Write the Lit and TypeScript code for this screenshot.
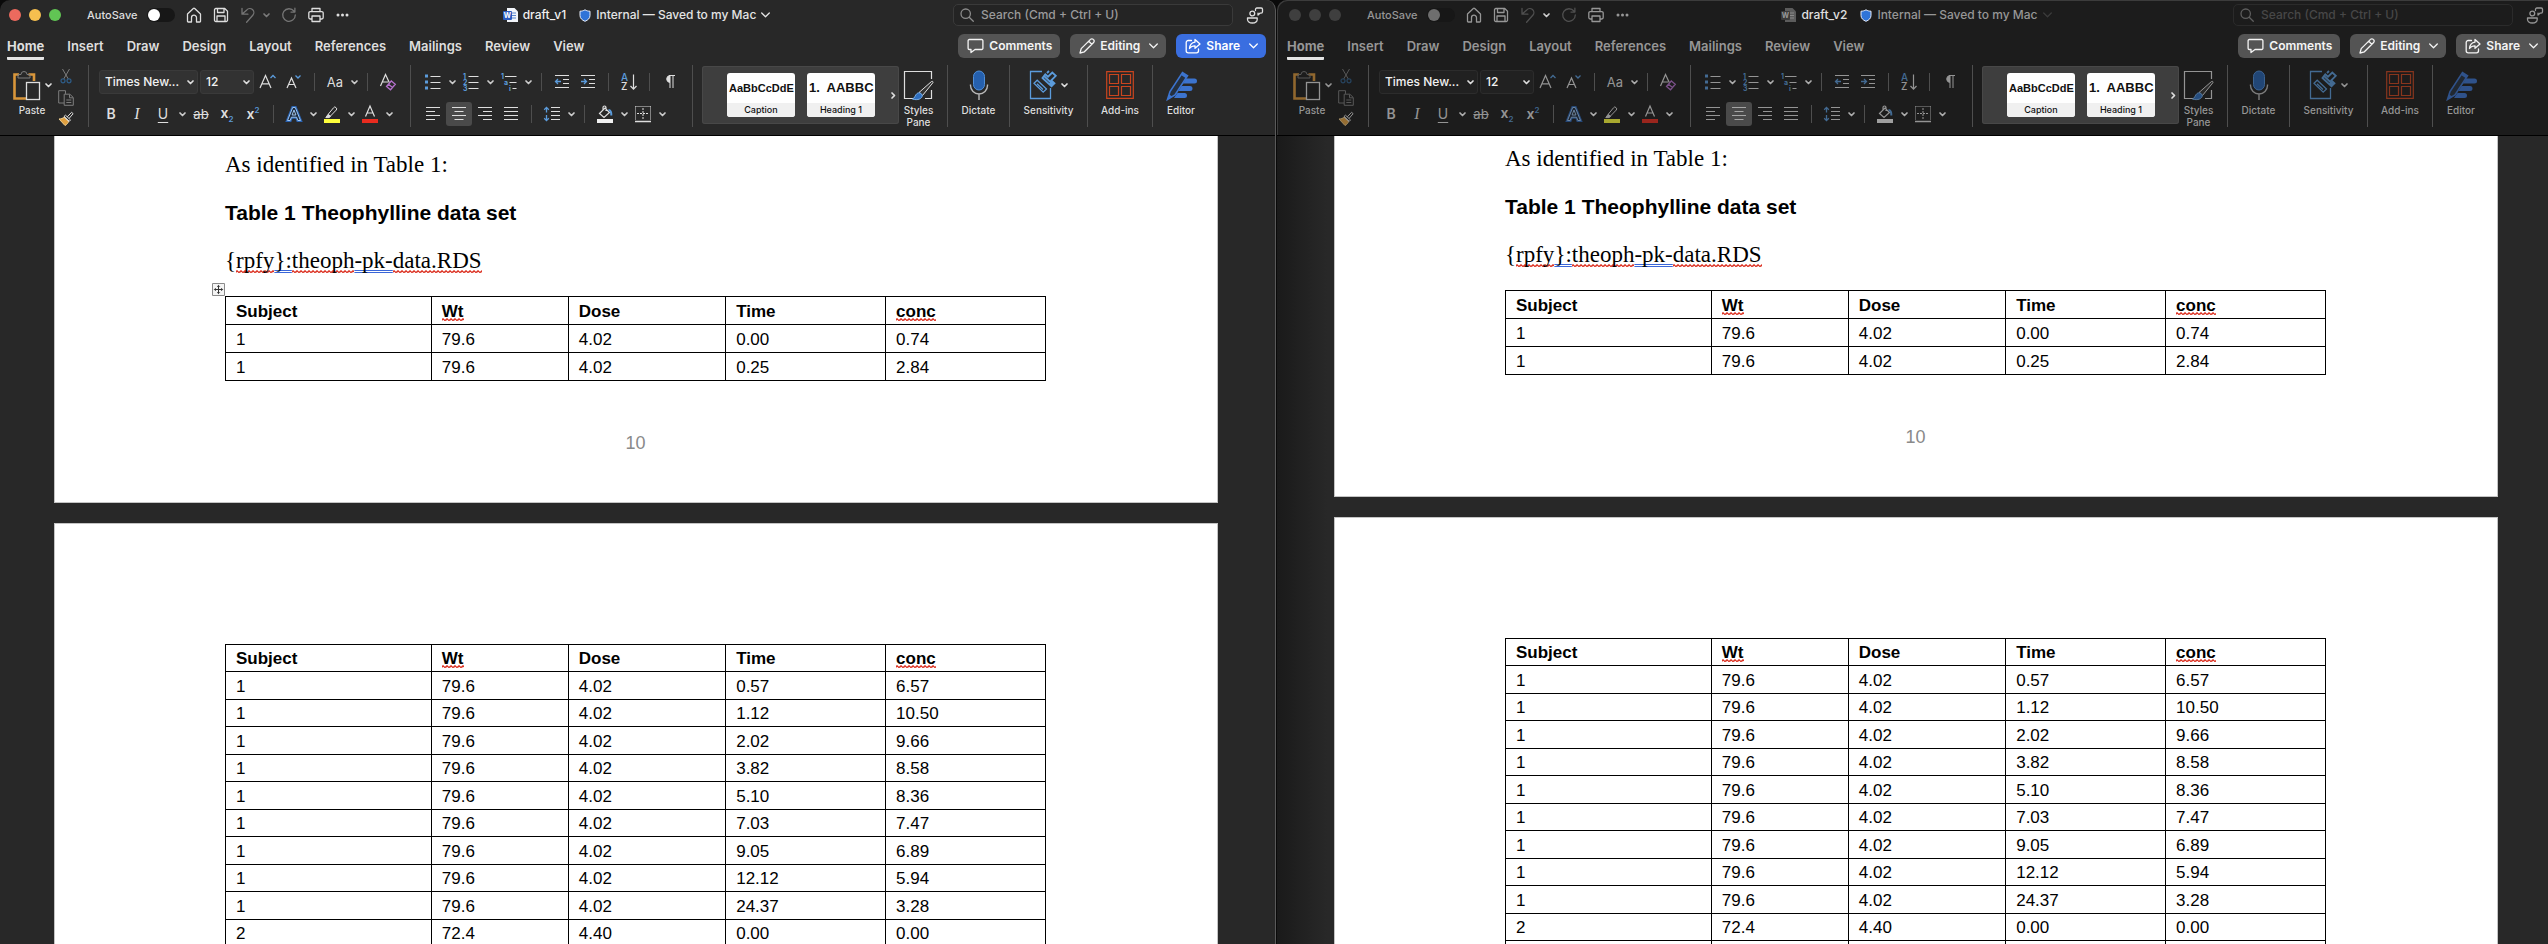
import { LitElement, html, css, TemplateResult } from "lit";
import { customElement, property } from "lit/decorators.js";
import { classMap } from "lit/directives/class-map.js";

type Row = string[];

const COLUMNS = ["Subject", "Wt", "Dose", "Time", "conc"];
const FLAGGED = new Set(["Wt", "conc"]);

const FIRST_ROWS: Row[] = [
  ["1", "79.6", "4.02", "0.00", "0.74"],
  ["1", "79.6", "4.02", "0.25", "2.84"],
];

const NEXT_ROWS: Row[] = [
  ["1", "79.6", "4.02", "0.57", "6.57"],
  ["1", "79.6", "4.02", "1.12", "10.50"],
  ["1", "79.6", "4.02", "2.02", "9.66"],
  ["1", "79.6", "4.02", "3.82", "8.58"],
  ["1", "79.6", "4.02", "5.10", "8.36"],
  ["1", "79.6", "4.02", "7.03", "7.47"],
  ["1", "79.6", "4.02", "9.05", "6.89"],
  ["1", "79.6", "4.02", "12.12", "5.94"],
  ["1", "79.6", "4.02", "24.37", "3.28"],
  ["2", "72.4", "4.40", "0.00", "0.00"],
  ["", "", "", "", ""],
];

const TABS = ["Home", "Insert", "Draw", "Design", "Layout", "References", "Mailings", "Review", "View"];

/* ---------- icons ---------- */

const chevron = html`<svg class="ic chev" width="7" height="5" viewBox="0 0 7 5"><path d="M1 1l2.5 2.5L6 1" /></svg>`;
const thinChevron = html`<svg class="ic thin" width="9" height="6" viewBox="0 0 9 6"><path d="M.7 1l3.8 3.7L8.3 1" /></svg>`;

const icons: Record<string, TemplateResult> = {
  home: html`<svg class="ic line" width="16" height="16" viewBox="0 0 16 16"><path d="M1.5 7L7.3 1.5a1 1 0 0 1 1.4 0L14.500 7v7.300a.7.7 0 0 1-.7.7h-3.300v-4.300a2.500 2.500 0 0 0-5 0V15H2.200a.7.7 0 0 1-.7-.7z" /></svg>`,
  save: html`<svg class="ic line" width="16" height="16" viewBox="0 0 16 16"><path d="M1.500 2.800A1.300 1.300 0 0 1 2.800 1.500h9l2.700 2.700v9a1.300 1.300 0 0 1-1.300 1.300H2.800a1.300 1.300 0 0 1-1.300-1.300zM4.500 1.500v4h6.500v-4M4 14.500V9h8v5.500" /></svg>`,
  undo: html`<svg class="ic line faint" width="16" height="16" viewBox="0 0 16 16"><path d="M2 1.300v5.900h5.900M2.200 7L6.800 2.900a4 4 0 0 1 6 5.400L6.600 15.200" /></svg>`,
  redo: html`<svg class="ic line faint" width="16" height="16" viewBox="0 0 16 16"><path d="M13 4.200A6.300 6.300 0 1 0 14.300 8M13.900 1.200v3.900H10" /></svg>`,
  print: html`<svg class="ic line" width="16" height="16" viewBox="0 0 16 16"><path d="M4 4.500V1.500h8v3M4 12H2.200A1.400 1.400 0 0 1 .8 10.600V6A1.400 1.400 0 0 1 2.200 4.600h11.600A1.400 1.400 0 0 1 15.200 6v4.600A1.400 1.400 0 0 1 13.800 12H12M4 9h8v5.500H4z" /></svg>`,
  more: html`<svg width="16" height="16" viewBox="0 0 16 16" fill="currentColor"><circle cx="3" cy="8" r="1.500" /><circle cx="7.500" cy="8" r="1.500" /><circle cx="12" cy="8" r="1.500" /></svg>`,
  word: html`<svg width="15" height="16" viewBox="0 0 15 16"><path class="sheet" d="M4 1h7.500L15 4.500V15H4z" /><path class="sheet-line" d="M9 6h4M9 8.500h4M9 11h4" /><rect class="tile" y="4" width="9" height="9" rx="1" /><text x="4.500" y="11" text-anchor="middle" class="tile-w">W</text></svg>`,
  shield: html`<svg width="12" height="13" viewBox="0 0 12 13"><path d="M6 .8c1.600 1 3.200 1.400 5 1.400v4.300c0 2.800-2 4.600-5 5.800-3-1.200-5-3-5-5.800V2.200c1.800 0 3.400-.4 5-1.400z" fill="#2f74d8" stroke="#e8eefb" /></svg>`,
  search: html`<svg class="ic line" width="14" height="14" viewBox="0 0 14 14"><circle cx="5.700" cy="5.700" r="4.700" /><path d="M9.200 9.200L13.300 13.300" /></svg>`,
  people: html`<svg class="ic line" width="18" height="17" viewBox="0 0 18 17"><circle cx="6.300" cy="6.500" r="2.400" /><path d="M1.500 11h9.700v1.200c0 2.200-2 3.800-4.900 3.800s-4.800-1.600-4.800-3.800zM9.500 3.500V2.300A1.300 1.300 0 0 1 10.800 1h4.400a1.300 1.300 0 0 1 1.300 1.300v2.500a1.300 1.300 0 0 1-1.300 1.300h-1l-2.200 2V6.100" /></svg>`,
  comment: html`<svg class="ic line" width="17" height="16" viewBox="0 0 17 16"><path d="M2.300 1.500h12.400a1.200 1.200 0 0 1 1.200 1.200v7.600a1.200 1.200 0 0 1-1.200 1.200H8l-4 3v-3H2.300a1.200 1.200 0 0 1-1.200-1.200V2.700a1.200 1.200 0 0 1 1.200-1.200z" /></svg>`,
  pencil: html`<svg class="ic line" width="16" height="16" viewBox="0 0 16 16"><path d="M1 15l1.200-4.400L11.500 1.400a1.900 1.900 0 0 1 2.800 0l.3.300a1.900 1.900 0 0 1 0 2.800L5.400 13.800zM9.800 3.200l3 3" /></svg>`,
  share: html`<svg class="ic line" width="16" height="16" viewBox="0 0 16 16"><path d="M6.500 2.500H3.200a2 2 0 0 0-2 2v8.300a2 2 0 0 0 2 2h8.300a2 2 0 0 0 2-2V11M10 1.500L15 6l-5 4.300V7.800c-2.600 0-4.200.8-5.500 2.700.3-3.600 2-5.900 5.500-6.400z" /></svg>`,
  paste: html`<svg class="ic" width="28" height="31" viewBox="0 0 28 31"><path d="M6 4.500H1.500v24H13" stroke="#d9963a" stroke-width="2.600" /><path d="M15.500 4.500h5.500V11" stroke="#d9963a" stroke-width="2.600" /><path class="gray" d="M5 8V4.500h3a3 3 0 0 1 6 0h3V8z" /><rect x="13.500" y="12.500" width="13" height="17" stroke-width="1.300" /></svg>`,
  cut: html`<svg class="ic" width="12" height="16" viewBox="0 0 12 16"><g class="gray"><path d="M2.500 1L8.300 11M9.500 1L3.700 11" /></g><g stroke="#2e5c87" stroke-width="1.200"><circle cx="3" cy="12.800" r="2" /><circle cx="9" cy="12.800" r="2" /></g></svg>`,
  copy: html`<svg class="ic gray" width="16" height="16" viewBox="0 0 16 16"><path d="M6 13H.7V.7h6.800v3.200M6.200 4.200h5.600L15.300 7.500v7.800H6.200zM11.500 4.500v3.300h3.500M8.300 10h5M8.300 12.500h5" /></svg>`,
  painter: html`<svg class="ic" width="16" height="16" viewBox="0 0 16 16"><path d="M1 8l6 6.500c2-1 3-2.500 3.800-4.200L6.400 6C5 7.300 3 8 1 8z" fill="#e0a040" stroke="#f0d090" /><path d="M6 5.600l5 4.700M7.500 4.200l5 4.700-1.300 1.500-5.300-4.800zM9.300 5.800L13.600 1.300l1.500 1.400-4 4.700" /></svg>`,
  grow: html`<svg class="ic" width="18" height="18" viewBox="0 0 18 18"><path d="M1 15L6.500 2.500 12 15M3 10.800h7" stroke-width="1.200" /><path class="blue" d="M11.500 5L14 2.500 16.500 5" stroke-width="1.300" /></svg>`,
  shrink: html`<svg class="ic" width="18" height="18" viewBox="0 0 18 18"><path d="M2 15L6.500 5 11 15M3.600 11.500h5.800" stroke-width="1.200" /><path class="blue" d="M10.500 2.500L13 5l2.500-2.500" stroke-width="1.300" /></svg>`,
  clear: html`<svg class="ic" width="18" height="18" viewBox="0 0 18 18"><path d="M1.500 13L6.500 1.500 10.500 10M3.500 9h5.500" stroke-width="1.200" /><path d="M7.500 13.500l4.800-5.500 4 3.300-4.800 5.500zM9.500 11.300l4 3.300" stroke="#b470cc" stroke-width="1.300" /></svg>`,
  effects: html`<svg class="ic" width="18" height="18" viewBox="0 0 18 18"><path d="M2.500 15.500L7.700 2.500h2.600l5.200 13h-2.700l-1.200-3.300H6.400l-1.200 3.300z" stroke="#2a62b0" stroke-width="3" /><path d="M2.500 15.500L7.700 2.500h2.600l5.200 13h-2.700l-1.200-3.300H6.400l-1.200 3.300zM7.100 10h3.800L9 5z" stroke="#9cc4f0" stroke-width="1" fill="#1d2c40" /></svg>`,
  highlight: html`<svg class="ic" width="18" height="18" viewBox="0 0 18 18"><path d="M5 9.500L10.500 2.800a1.600 1.600 0 0 1 2.500-.2l.2.200a1.600 1.600 0 0 1 0 2.300L7.500 11z" /><path d="M5 9.500L7.500 11.500 6 12.600H2.800z" fill="currentColor" /><path d="M1 14h16v4H1z" fill="#ffff3c" stroke="none" /></svg>`,
  color: html`<svg class="ic" width="18" height="18" viewBox="0 0 18 18"><path d="M4.500 11.500L9 1l4.500 10.500M6.200 8h5.600" stroke-width="1.200" /><path d="M1 14h16v4H1z" fill="#e82b1f" stroke="none" /></svg>`,
  bullets: html`<svg class="ic" width="18" height="18" viewBox="0 0 18 18"><path class="fill" d="M1 1.500h3v3H1zM1 7.500h3v3H1zM1 13.500h3v3H1z" /><path d="M6.500 3.500h10M6.500 9.500h10M6.500 15.500h10" /></svg>`,
  numbers: html`<svg class="ic" width="18" height="18" viewBox="0 0 18 18"><text class="tiny" x="1" y="5.500">1</text><text class="tiny" x="1" y="11.500">2</text><text class="tiny" x="1" y="17.500">3</text><path d="M6.500 3.500h10M6.500 9.500h10M6.500 15.500h10" /></svg>`,
  levels: html`<svg class="ic" width="18" height="18" viewBox="0 0 18 18"><text class="tiny" x="1" y="5.500">1</text><text class="tiny" x="4" y="11.500">a</text><text class="tiny" x="9" y="17.500">i</text><path d="M5 3.500h11.500M9.500 9.500h7M12.500 15.500h4" /></svg>`,
  outdent: html`<svg class="ic" width="16" height="16" viewBox="0 0 16 16"><path d="M1 1.500h14M9 5.500h6M9 9.500h6M1 13.500h14" /><path class="blue" d="M1.500 7.500H7M4 5L1.500 7.500 4 10" stroke-width="1.300" /></svg>`,
  indent: html`<svg class="ic" width="16" height="16" viewBox="0 0 16 16"><path d="M1 1.500h14M9 5.500h6M9 9.500h6M1 13.500h14" /><path class="blue" d="M1 7.500h5.500M4 5l2.500 2.500L4 10" stroke-width="1.300" /></svg>`,
  sort: html`<svg class="ic" width="18" height="18" viewBox="0 0 18 18"><text class="letter blue-text" x="1" y="8">A</text><text class="letter" x="1" y="17">Z</text><path d="M13.500 1.500V16M10.500 13l3 3.200 3-3.200" stroke-width="1.200" /></svg>`,
  pilcrow: html`<svg class="ic" width="12" height="16" viewBox="0 0 12 16"><path d="M5.500 8.500a3.600 3.600 0 0 1 0-7z" fill="currentColor" /><path d="M5 1.500h6M6 1.500V14M9 1.500V14" /></svg>`,
  left: html`<svg class="ic" width="16" height="16" viewBox="0 0 16 16"><path d="M1 1.500h14M1 5.500h9M1 9.500h14M1 13.500h9" /></svg>`,
  center: html`<svg class="ic" width="16" height="16" viewBox="0 0 16 16"><path d="M1 1.500h14M3.500 5.500h9M1 9.500h14M3.500 13.500h9" /></svg>`,
  right: html`<svg class="ic" width="16" height="16" viewBox="0 0 16 16"><path d="M1 1.500h14M6 5.500h9M1 9.500h14M6 13.500h9" /></svg>`,
  justify: html`<svg class="ic" width="16" height="16" viewBox="0 0 16 16"><path d="M1 1.500h14M1 5.500h14M1 9.500h14M1 13.500h14" /></svg>`,
  spacing: html`<svg class="ic" width="18" height="16" viewBox="0 0 18 16"><path d="M8 1.500h9M8 5.500h9M8 9.500h9M8 13.500h9" /><path class="blue" d="M3.500 1.500v5M1.200 3.700l2.300-2.300 2.300 2.300M3.500 9v5.500M1.200 12.300l2.300 2.300 2.300-2.300" stroke-width="1.300" /></svg>`,
  shading: html`<svg class="ic" width="18" height="18" viewBox="0 0 18 18"><path d="M3.500 8.500L9 3l4.500 4.500L8 12.500zM7 5V2.500a1.500 1.500 0 0 1 3 0V6" stroke-width="1.200" /><path class="blue" d="M12.500 5c2 0 3 2 2.800 5.500" stroke-width="2" /><path class="bar" d="M1 14h16v4H1z" stroke="none" /></svg>`,
  borders: html`<svg class="ic" width="18" height="18" viewBox="0 0 18 18"><path d="M1.500 1.500h15M1.500 1.500v13M16.500 1.500v13" stroke-dasharray="1 1" /><path d="M9 3v11M3 8.500h12" stroke-dasharray="2 1" /><path d="M1 16.500h16" stroke-width="1.500" /></svg>`,
  styles: html`<svg class="ic" width="32" height="31" viewBox="0 0 32 31"><path d="M10 28.500H1.500v-27h27V9M28.500 20v8.500H22" stroke-width="1.200" /><path d="M16 22.500L28.500 11.500c1-.6 1.900.3 1.400 1.200L19.500 25.500z" fill="#353535" /><path d="M9.500 29c2.500-.8 2.300-3.800 4.500-5.500 2-1.500 4.800-.3 5.200 1.800.5 3.300-4.700 5.500-9.700 3.700z" fill="#2f6fc0" stroke="#78aee8" /></svg>`,
  dictate: html`<svg class="ic" width="20" height="31" viewBox="0 0 20 31"><rect x="4.500" y="1" width="11" height="19" rx="5.500" fill="#2560ae" stroke="#4f8fd8" /><path d="M1.500 14.500v1a8.500 8.500 0 0 0 17 0v-1M10 24.500V30" class="soft" stroke-width="1.400" /></svg>`,
  sensitivity: html`<svg class="ic" width="28" height="31" viewBox="0 0 28 31"><g class="blue" stroke-width="1.300"><path d="M13 1.500H1.500v27h20V18" /><path d="M5 13.200l3.200-3L17.500 19l-3.300 3.200z" /><path d="M8 13.800l6 5.600" /><path d="M13.500 8l9 8.300 3-3-3.200-3 4.500-4.500-3.500-3.300L19 6.700l-2.700-2.400zM15 6l9 8.500M18 3l2-2M21 13l3 3" stroke-width="1.800" /></g></svg>`,
  addins: html`<svg class="ic" width="28" height="28" viewBox="0 0 28 28"><g stroke="#c9451f" stroke-width="1.200"><path d="M.7.700h26.600v26.600H.7zM3.500 3.500h9v9h-9zM15.500 3.500h9v9h-9zM3.500 15.500h9v9h-9zM15.500 15.500h9v9h-9z" /></g></svg>`,
  editor: html`<svg class="ic" width="31" height="31" viewBox="0 0 31 31"><path d="M20 8.500h8.500a2.500 2.500 0 0 1 0 5H17zM15.500 16h8.500a2.500 2.500 0 0 1 0 5H12.500zM11.500 23h7a2.500 2.500 0 0 1 0 5H8z" fill="#3c74cf" stroke="none" /><path d="M1.500 29.500L4 21.500 16.500 2.500l5 3.200L9 25z" fill="#25303f" stroke="#3c74cf" stroke-width="1.600" /><path d="M16.500 2.500l5 3.200-1.500 2.500-5-3.200zM1.500 29.500l1.500-5 3.500 2z" fill="#3c74cf" stroke="none" /></svg>`,
  next: html`<svg class="ic chev" width="5" height="7" viewBox="0 0 5 7"><path d="M1 1l2.500 2.500L1 6" /></svg>`,
  move: html`<svg width="13" height="13" viewBox="0 0 13 13" fill="none" stroke="#333"><path d="M.5.500h12v12H.5z" fill="#f4f4f4" stroke="#8a8a8a" /><path d="M6.500 2.500v8M2.500 6.500h8M5.200 3.700l1.300-1.300 1.300 1.300M5.200 9.300l1.300 1.300 1.300-1.300M3.700 5.200L2.400 6.500l1.300 1.300M9.300 5.200l1.300 1.300-1.300 1.300" /></svg>`,
};

/** One Word window: title bar, ribbon and the scrolled document. */
@customElement("word-window")
export class WordWindow extends LitElement {
  @property() name = "";
  @property({ type: Boolean, reflect: true }) active = false;

  static styles = css`
    :host {
      --chrome: #1c1c1c;
      --text: #969696;
      --strong: #e0e0e0;
      --inset-left: 3px;
      --inset-right: 2px;
      --dim: 0.62;
      --page-top: 9px;
      --blue: #5b9bdb;
      display: flex;
      flex-direction: column;
      min-width: 0;
      min-height: 0;
      overflow: hidden;
      background: var(--chrome);
      color: var(--text);
      border-radius: 10px 0 0 0;
      box-shadow: inset 1px 1px 0 #3c3c3c;
      font: 500 12px/16px Inter, "Liberation Sans", sans-serif;
    }
    :host([active]) {
      --chrome: #282828;
      --text: #dedede;
      --strong: #f0f0f0;
      --inset-left: 0px;
      --inset-right: 9px;
      --dim: 1;
      --page-top: 15px;
      border-right: 1px solid #5a5a5a;
      border-radius: 10px 10px 0 0;
      box-shadow: none;
    }
    button, select, input {
      font: inherit;
      color: inherit;
      margin: 0;
      padding: 0;
      border: 0;
      background: none;
    }
    button { display: inline-flex; align-items: center; justify-content: center; }
    svg { display: block; flex: none; overflow: visible; }
    .ic { fill: none; stroke: currentColor; stroke-width: 1; }
    .line { stroke-width: 1.3; stroke-linejoin: round; stroke-linecap: round; }
    .chev { stroke-width: 1.7; stroke-linecap: round; stroke-linejoin: round; }
    .thin { stroke-width: 1.3; stroke-linecap: round; stroke-linejoin: round; }
    .gray { stroke: #7d7d7d; }
    .soft { stroke: #b8b8b8; }
    .blue { stroke: var(--blue); }
    .fill { fill: var(--blue); stroke: none; }
    .bar { fill: #f0f0f0; }
    .faint { opacity: 0.42; }
    .tiny { fill: var(--blue); stroke: none; font: 700 7px Inter, sans-serif; }
    .letter { fill: currentColor; stroke: none; font: 500 10px Inter, sans-serif; }
    .blue-text { fill: var(--blue); }

    .title-bar {
      display: grid;
      grid-template-columns: minmax(0, 1fr) auto minmax(0, 1fr);
      align-items: center;
      height: 30px;
      flex: none;
      padding-left: calc(var(--inset-left) + 9px);
      padding-right: calc(var(--inset-right) + 2px);
    }
    .quick { display: flex; align-items: center; gap: 11px; }
    .lights { display: flex; gap: 8px; margin-right: 15px; }
    .light { width: 12px; height: 12px; border-radius: 50%; background: #3f3f3f; }
    :host([active]) .close { background: #ec6a5e; }
    :host([active]) .minimise { background: #f5bf4f; }
    :host([active]) .zoom { background: #61c554; }
    .autosave { display: flex; align-items: center; gap: 10px; font-size: 11px; }
    .switch {
      appearance: none;
      display: flex;
      align-items: center;
      width: 28px;
      height: 14px;
      padding: 1px;
      box-sizing: border-box;
      border-radius: 7px;
      background: #171717;
    }
    .switch::before { content: ""; width: 12px; height: 12px; border-radius: 50%; background: #6e6e6e; }
    :host([active]) .switch::before { background: #fff; }
    .undo { display: flex; align-items: center; gap: 7px; }
    .undo button:last-child { color: #cfcfcf; }
    :host([active]) .undo button:last-child { color: #7a7a7a; }
    .doc-title { display: flex; align-items: center; gap: 5px; font-weight: 500; }
    .doc-title h1 { margin: 0 8px 0 0; font: inherit; color: var(--strong); }
    .doc-title .thin { opacity: 0.25; }
    :host([active]) .doc-title { color: #e4e4e4; }
    :host([active]) .doc-title .thin { opacity: 1; }
    .sheet { fill: #5c5c5c; }
    .sheet-line { stroke: #8a8a8a; }
    .tile { fill: #3a3a3a; }
    .tile-w { fill: #9a9a9a; font: 700 7px Inter, sans-serif; }
    :host([active]) .sheet { fill: #f2f5fa; }
    :host([active]) .sheet-line { stroke: #5a86d0; }
    :host([active]) .tile { fill: #2a5cc0; }
    :host([active]) .tile-w { fill: #fff; }
    .find { display: flex; align-items: center; justify-content: flex-end; gap: 13px; min-width: 0; }
    .search {
      display: flex;
      align-items: center;
      gap: 7px;
      flex: 0 1 280px;
      height: 22px;
      box-sizing: border-box;
      padding: 0 6px;
      border: 1px solid #2b2b2b;
      border-radius: 5px;
      color: #5e5e5e;
    }
    .search input { flex: 1; min-width: 0; outline: none; }
    .search input::placeholder { color: #474747; opacity: 1; }
    :host([active]) .search { border-color: #3a3a3a; background: #242424; color: #8c8c8c; }
    :host([active]) .search input::placeholder { color: #9a9a9a; }

    .tab-bar {
      display: flex;
      align-items: center;
      justify-content: space-between;
      height: 32px;
      flex: none;
      padding-left: calc(var(--inset-left) + 7px);
      padding-right: var(--inset-right);
      font-size: 12px;
    }
    .tabs { display: flex; gap: 23px; font-weight: 600; font-size: 13px; }
    .tabs button { padding: 5px 0 3px; border-bottom: 3px solid transparent; border-radius: 1px; }
    .tabs .current { font-weight: 700; border-bottom-color: #e4e4e4; }
    .actions { display: flex; gap: 10px; }
    .actions button {
      height: 24px;
      gap: 5px;
      padding: 0 8px 0 9px;
      border-radius: 6px;
      background: #545454;
      color: #f4f4f4;
      font-weight: 600;
    }
    .actions .thin { margin-left: 4px; }
    :host([active]) .actions .primary { background: #3a6ee0; color: #fff; }

    .ribbon {
      display: flex;
      gap: 9px;
      height: 62px;
      flex: none;
      padding: 3px var(--inset-right) 8px calc(var(--inset-left) + 12px);
      border-bottom: 1px solid #000;
    }
    .rule { width: 1px; background: #4e4e4e; }
    .paste, .big { flex-direction: column; justify-content: flex-start; flex: none; padding-top: 5px; gap: 4px; font-size: 10px; line-height: 12px; }
    .paste { width: 40px; gap: 3px; }
    .with-menu { display: flex; align-items: center; gap: 4px; }
    .art { display: flex; align-items: center; height: 30px; }
    .ribbon .ic, .glyph { color: #dedede; }
    .paste .ic, .big .ic, .tool .ic, .glyph { opacity: var(--dim); }
    .small { display: flex; flex-direction: column; justify-content: space-between; width: 26px; margin-left: -8px; padding-top: 3px; box-sizing: border-box; }
    .small button { opacity: var(--dim); }
    .rows { display: flex; flex-direction: column; gap: 8px; padding-top: 5px; flex: none; }
    .row { display: flex; height: 24px; }
    .tool { width: 26px; flex: none; border-radius: 3px; font-size: 15px; }
    .tool.on { background: #4a4a4a; }
    .menu { width: 12px; flex: none; }
    .menu .chev { opacity: 0.9; }
    :host(:not([active])) .menu .chev { opacity: 0.75; }
    .tick { display: flex; justify-content: center; width: 15px; padding: 3px 0; box-sizing: border-box; }
    .tick::before { content: ""; width: 1px; background: #4e4e4e; }
    .strong { font-weight: 600; font-size: 14px; }
    .serif { font: italic 400 16px "Liberation Serif", serif; }
    .under { text-decoration: underline; text-underline-offset: 3px; font-weight: 400; font-size: 14px; }
    .struck { text-decoration: line-through; font-weight: 400; font-size: 13px; }
    .caps { font-weight: 400; font-size: 13px; }
    .tool sub, .tool sup { color: var(--blue); font-size: 8px; line-height: 8px; }
    .combo { display: grid; align-items: center; margin-right: 1px; }
    .combo:first-child { margin: 0 2px 0 1px; }
    .combo select, .combo .chev { grid-area: 1 / 1; }
    .combo select {
      appearance: none;
      width: 54px;
      height: 24px;
      box-sizing: border-box;
      padding: 0 18px 0 5px;
      border: 1px solid #3a3a3a;
      border-radius: 3px;
      background: #323232;
      color: #f2f2f2;
      font-size: 12px;
      font-weight: 500;
    }
    :host(:not([active])) .combo select { background: #212121; border-color: #2c2c2c; }
    .combo:first-child select { width: 99px; }
    .combo .chev { justify-self: end; margin-right: 4px; pointer-events: none; }

    .gallery {
      display: flex;
      align-items: center;
      flex: none;
      gap: 12px;
      width: 197px;
      height: 58px;
      margin: 1px -9px 0 0;
      padding-left: 25px;
      box-sizing: border-box;
      border-radius: 3px;
      background: #3e3e3e;
      box-shadow: inset 0 0 0 1px #484848;
      color: #f0f0f0;
    }
    .gallery .card {
      display: flex;
      flex-direction: column;
      align-items: stretch;
      width: 68px;
      height: 44px;
      border-radius: 3px;
      overflow: hidden;
      background: #fff;
      color: #111;
      font: 500 9px/14px Inter, sans-serif;
    }
    .sample { display: block; height: 30px; padding-left: 2px; white-space: pre; overflow: hidden; text-align: left; font: 700 11px/30px "Liberation Sans", sans-serif; }
    .sample.large { font-size: 13px; }
    .caption { display: block; background: #f0f0f0; }
    .scroll { width: 12px; height: 44px; }
    .big.pane { width: 39px; }
    .big.dictate { width: 43px; }
    .big.sensitivity { width: 59px; }
    .big.addins { width: 46px; }
    .big.editor { width: 38px; }

    .canvas {
      flex: 1;
      min-height: 0;
      overflow: hidden;
      padding: 0 50px 0 57px;
      background: linear-gradient(90deg, #1a1a1a, #282828 50px);
      color: #000;
    }
    :host([active]) .canvas { padding: 0 57px 0 54px; background: #282828; }
    .page { background: #fff; border: 1px solid #c4c4c4; padding: 120px 171px 49px 170px; margin-bottom: 20px; }
    .page:first-child { padding-top: var(--page-top); border-top: 0; }
    .body { margin: 0; font: 23px/28px "Liberation Serif", serif; }
    h2 { margin: 20px 0; font: 700 21px/28px "Liberation Sans", sans-serif; }
    .wrong {
      background: url("data:image/svg+xml,%3Csvg xmlns='http://www.w3.org/2000/svg' width='4' height='3'%3E%3Cpath d='M-1 3.500L1 .7l2 2 2-2' fill='none' stroke='%23dc3324' stroke-width='1.200'/%3E%3C/svg%3E") repeat-x left bottom / 4px 3px;
    }
    .grammar { text-decoration: underline double #3a66d8 1px; text-decoration-skip-ink: none; text-underline-offset: 2px; }
    .table-box { position: relative; }
    .body + .table-box { margin-top: 21px; }
    .handle { position: absolute; left: -13px; top: -13px; }
    table { width: 100%; border-collapse: collapse; table-layout: fixed; font: 17px/24px "Liberation Sans", sans-serif; }
    th, td { box-sizing: border-box; height: 27px; padding: 2px 0 0 10px; border: 1px solid #000; text-align: left; }
    tbody tr:nth-child(odd) td, .roomy th, .roomy td { height: 28px; padding-top: 3px; }
    col:nth-child(1) { width: 25.1%; }
    col:nth-child(2) { width: 16.7%; }
    col:nth-child(3) { width: 19.2%; }
    col:nth-child(4) { width: 19.5%; }
    .folio { margin: 52px 0 0; text-align: center; color: #8a8a8a; font: 18px/20px "Liberation Sans", sans-serif; }
  `;

  private tool(label: string, content: TemplateResult | string, extra = "") {
    const on = extra === "on";
    const glyph = extra && !on ? html`<span class="glyph ${extra}">${content}</span>` : content;
    return html`<button class=${classMap({ tool: true, on })} aria-label=${label}>${glyph}</button>`;
  }

  private menu(label: string) {
    return html`<button class="menu" aria-label="${label} options">${chevron}</button>`;
  }

  private big(kind: string, label: TemplateResult | string, art: TemplateResult) {
    return html`<button class="big ${kind}"><span class="art with-menu">${art}</span><span>${label}</span></button>`;
  }

  private table(rows: Row[], roomy = false) {
    return html`<table class=${classMap({ roomy })}>
      <colgroup>${COLUMNS.map(() => html`<col />`)}</colgroup>
      <thead><tr>${COLUMNS.map((c) => html`<th scope="col">${FLAGGED.has(c) ? html`<span class="wrong">${c}</span>` : c}</th>`)}</tr></thead>
      <tbody>${rows.map((r) => html`<tr>${r.map((v) => html`<td>${v}</td>`)}</tr>`)}</tbody>
    </table>`;
  }

  private titleBar() {
    return html`<header class="title-bar">
      <div class="quick">
        <span class="lights"><button class="light close" aria-label="Close"></button><button class="light minimise" aria-label="Minimise"></button><button class="light zoom" aria-label="Zoom"></button></span>
        <label class="autosave">AutoSave<input class="switch" type="checkbox" role="switch" /></label>
        <button aria-label="Home">${icons.home}</button>
        <button aria-label="Save">${icons.save}</button>
        <span class="undo"><button aria-label="Undo">${icons.undo}</button><button aria-label="Undo history">${chevron}</button></span>
        <button aria-label="Redo">${icons.redo}</button>
        <button aria-label="Print">${icons.print}</button>
        <button aria-label="More">${icons.more}</button>
      </div>
      <div class="doc-title">${icons.word}<h1>${this.name}</h1>${icons.shield}<span>Internal — Saved to my Mac</span>${thinChevron}</div>
      <div class="find">
        <label class="search">${icons.search}<input type="search" aria-label="Search" placeholder="Search (Cmd + Ctrl + U)" /></label>
        <button aria-label="Presence">${icons.people}</button>
      </div>
    </header>`;
  }

  private tabBar() {
    return html`<div class="tab-bar">
      <nav class="tabs">${TABS.map((t, i) => html`<button class=${classMap({ current: i === 0 })}>${t}</button>`)}</nav>
      <div class="actions">
        <button>${icons.comment}Comments</button>
        <button>${icons.pencil}Editing${thinChevron}</button>
        <button class="primary">${icons.share}Share${thinChevron}</button>
      </div>
    </div>`;
  }

  private ribbon() {
    const tick = html`<span class="tick"></span>`;
    const rule = html`<span class="rule"></span>`;
    return html`<div class="ribbon">
      <button class="paste"><span class="with-menu">${icons.paste}${chevron}</span><span>Paste</span></button>
      <div class="small"><button aria-label="Cut">${icons.cut}</button><button aria-label="Copy">${icons.copy}</button><button aria-label="Format painter">${icons.painter}</button></div>
      ${rule}
      <div class="rows">
        <div class="row">
          <span class="combo"><select aria-label="Font"><option>Times New...</option></select>${chevron}</span>
          <span class="combo"><select aria-label="Font size"><option>12</option></select>${chevron}</span>
          ${this.tool("Increase font size", icons.grow)}${this.tool("Decrease font size", icons.shrink)}${tick}
          ${this.tool("Change case", "Aa", "caps")}${this.menu("Change case")}${tick}${this.tool("Clear formatting", icons.clear)}
        </div>
        <div class="row">
          ${this.tool("Bold", "B", "strong")}${this.tool("Italic", "I", "serif")}${this.tool("Underline", "U", "under")}${this.menu("Underline")}
          ${this.tool("Strikethrough", "ab", "struck")}${this.tool("Subscript", html`x<sub>2</sub>`, "strong")}${this.tool("Superscript", html`x<sup>2</sup>`, "strong")}${tick}
          ${this.tool("Text effects", icons.effects)}${this.menu("Text effects")}${this.tool("Highlight", icons.highlight)}${this.menu("Highlight")}${this.tool("Font color", icons.color)}${this.menu("Font color")}
        </div>
      </div>
      ${rule}
      <div class="rows">
        <div class="row">
          ${this.tool("Bullets", icons.bullets)}${this.menu("Bullets")}${this.tool("Numbering", icons.numbers)}${this.menu("Numbering")}${this.tool("Multilevel list", icons.levels)}${this.menu("Multilevel list")}${tick}
          ${this.tool("Decrease indent", icons.outdent)}${this.tool("Increase indent", icons.indent)}${tick}${this.tool("Sort", icons.sort)}${tick}${this.tool("Paragraph marks", icons.pilcrow)}
        </div>
        <div class="row">
          ${this.tool("Align left", icons.left)}${this.tool("Center", icons.center, "on")}${this.tool("Align right", icons.right)}${this.tool("Justify", icons.justify)}${tick}
          ${this.tool("Line spacing", icons.spacing)}${this.menu("Line spacing")}${tick}${this.tool("Shading", icons.shading)}${this.menu("Shading")}${this.tool("Borders", icons.borders)}${this.menu("Borders")}
        </div>
      </div>
      ${rule}
      <div class="gallery">
        <button class="card"><span class="sample">AaBbCcDdE</span><span class="caption">Caption</span></button>
        <button class="card"><span class="sample large">1.  AABBC</span><span class="caption">Heading 1</span></button>
        <button class="scroll" aria-label="More styles">${icons.next}</button>
      </div>
      ${this.big("pane", html`Styles<br />Pane`, icons.styles)}${rule}
      ${this.big("dictate", "Dictate", icons.dictate)}${rule}
      ${this.big("sensitivity", "Sensitivity", html`${icons.sensitivity}${chevron}`)}${rule}
      ${this.big("addins", "Add-ins", icons.addins)}${rule}
      ${this.big("editor", "Editor", icons.editor)}
    </div>`;
  }

  render() {
    return html`${this.titleBar()}${this.tabBar()}${this.ribbon()}
      <main class="canvas">
        <article class="page">
          <p class="body">As identified in Table 1:</p>
          <h2>Table 1 Theophylline data set</h2>
          <p class="body">{<span class="wrong">rpfy</span><span class="grammar">}:</span><span class="wrong">theoph</span><span class="grammar">-pk-</span><span class="wrong">data.RDS</span></p>
          <div class="table-box">${this.active ? html`<button class="handle" aria-label="Move table">${icons.move}</button>` : ""}${this.table(FIRST_ROWS, true)}</div>
          <p class="folio">10</p>
        </article>
        <article class="page"><div class="table-box">${this.table(NEXT_ROWS)}</div></article>
      </main>`;
  }
}

@customElement("app-root")
export class AppRoot extends LitElement {
  static styles = css`
    :host {
      display: grid;
      grid-template-columns: minmax(0, 1276fr) minmax(0, 1271fr);
      gap: 1px;
      height: 100vh;
      overflow: hidden;
      background: #0a0a0a;
    }
  `;

  render() {
    return html`<word-window name="draft_v1" active></word-window><word-window name="draft_v2"></word-window>`;
  }
}
